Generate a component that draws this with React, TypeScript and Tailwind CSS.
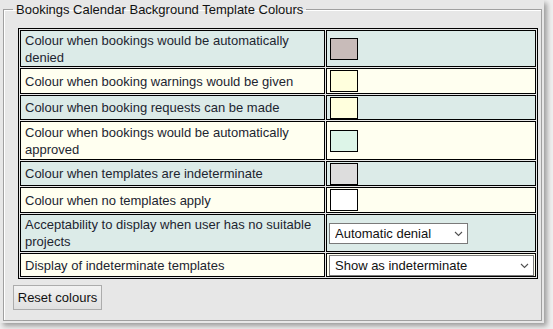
import React, { useState } from 'react';

type Row = {
  label: string;
  h: string;
  swatch?: string;
  select?: { value: string; options: string[]; w: string };
};

const rows: Row[] = [
  { label: 'Colour when bookings would be automatically denied', h: 'h-[37px]', swatch: 'bg-[#c8bbb9]' },
  { label: 'Colour when booking warnings would be given', h: 'h-[26px]', swatch: 'bg-[#ffffdd]' },
  { label: 'Colour when booking requests can be made', h: 'h-[25px]', swatch: 'bg-[#ffffdd]' },
  { label: 'Colour when bookings would be automatically approved', h: 'h-[39px]', swatch: 'bg-[#ddf5e8]' },
  { label: 'Colour when templates are indeterminate', h: 'h-[25px]', swatch: 'bg-[#dddddd]' },
  { label: 'Colour when no templates apply', h: 'h-[26px]', swatch: 'bg-white' },
  {
    label: 'Acceptability to display when user has no suitable projects',
    h: 'h-[38px]',
    select: { value: 'Automatic denial', options: ['Automatic denial', 'Warning', 'Request', 'Automatic approval'], w: 'w-[139px]' },
  },
  {
    label: 'Display of indeterminate templates',
    h: 'h-[24px]',
    select: { value: 'Show as indeterminate', options: ['Show as indeterminate', 'Show as denied', 'Show as approved'], w: 'w-[205px]' },
  },
];

function Chevron() {
  return (
    <svg width="9" height="6" viewBox="0 0 9 6" className="pointer-events-none absolute right-[5px] top-[8px]">
      <path d="M1 1 L4.5 4.5 L8 1" fill="none" stroke="#505050" strokeWidth="1.1" />
    </svg>
  );
}

function PlainSelect({ value, options, w }: { value: string; options: string[]; w: string }) {
  const [val, setVal] = useState(value);
  return (
    <div className={`relative ml-[2px] h-[21px] ${w}`}>
      <select
        value={val}
        onChange={e => setVal(e.target.value)}
        className="h-full w-full appearance-none rounded-none border border-[#7a7a7a] bg-white pl-[5px] text-[13px] leading-[19px] text-[#111] outline-none"
      >
        {options.map(o => <option key={o}>{o}</option>)}
      </select>
      <Chevron />
    </div>
  );
}

export default function App() {
  return (
    <div className="h-[329px] w-[553px] bg-[#efefef] font-['Liberation_Sans',Arial,sans-serif]">
      <div className="h-[323px] w-[544px] bg-[#e7e7e7] pt-[2px] shadow-[3px_3px_5px_rgba(0,0,0,0.35)]">
        <fieldset className="ml-[3px] h-[319px] w-[539px] border border-[#a0a0a0] pl-[9px] shadow-[inset_1px_1px_0_#fff]">
          <legend className="px-[3px] text-[13px] leading-[15px] text-[#111]">
            Bookings Calendar Background Template Colours
          </legend>
          {/* colour settings table */}
          <table className="ml-[5px] mt-[11px] w-[520px] border-separate border-spacing-[1px] border border-black text-[13px] leading-[17px] text-[#1c2530]">
            <tbody>
              {rows.map((r, i) => (
                <tr key={r.label} className={i % 2 === 0 ? 'bg-[#dcebe8]' : 'bg-[#fffff0]'}>
                  <td className={`${r.h} w-[305px] border border-black pl-[4px] pr-[1px] align-middle`}>
                    {r.label}
                  </td>
                  <td className={`${r.h} border border-black p-0 align-middle`}>
                    {r.swatch && <div className={`ml-[3px] h-[22px] w-[28px] border border-black ${r.swatch}`} />}
                    {r.select && <PlainSelect {...r.select} />}
                  </td>
                </tr>
              ))}
            </tbody>
          </table>
          <button
            type="button"
            className="mt-[6px] h-[25px] w-[89px] border border-[#acacac] bg-gradient-to-b from-[#f2f2f2] to-[#e0e0e0] text-[13px] text-[#111]"
          >
            Reset colours
          </button>
        </fieldset>
      </div>
    </div>
  );
}
